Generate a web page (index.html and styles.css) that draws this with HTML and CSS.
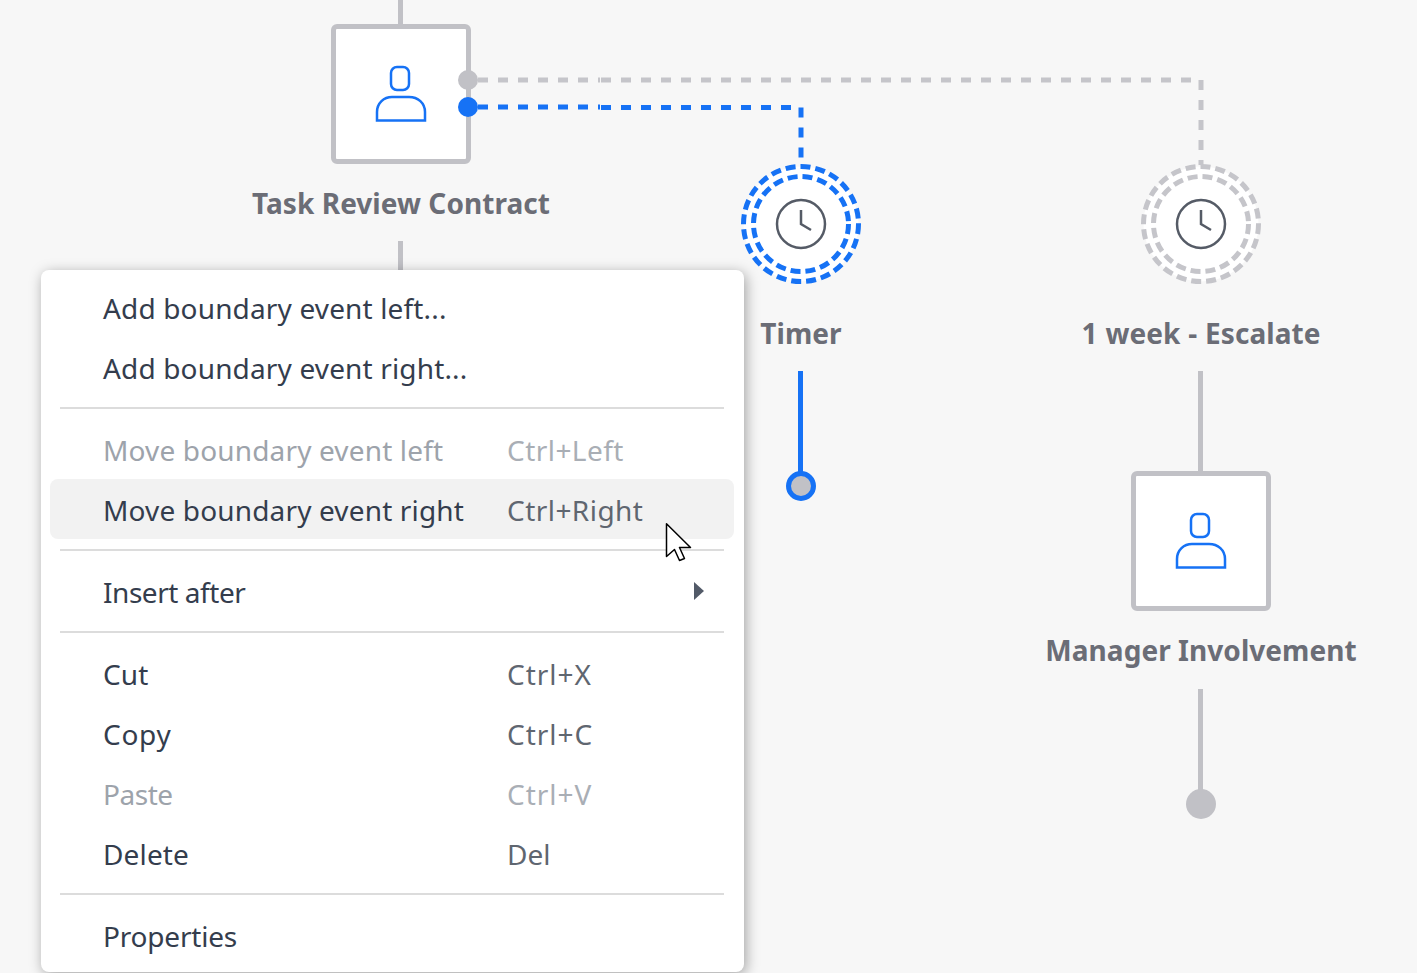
FILE: index.html
```html
<!DOCTYPE html>
<html lang="en">
<head>
<meta charset="utf-8">
<title>Process diagram</title>
<link rel="stylesheet" href="styles.css">
</head>
<body>
<main class="canvas">
  <svg class="wires" width="1417" height="973" viewBox="0 0 1417 973" fill="none">
    <g class="wire-solid">
      <path d="M400.5 0V24"/><path d="M400.5 241V280"/>
      <path d="M1200.5 371V472"/><path d="M1200.5 689V790"/>
    </g>
    <path class="wire-solid-blue" d="M800.5 371V472"/>
    <path class="wire-dash" d="M478 80H600"/>
    <path class="wire-dash" d="M601 80H1201V165"/>
    <path class="wire-dash-blue" d="M478 107H600"/>
    <path class="wire-dash-blue" d="M601 107.500H801V165"/>
  </svg>

  <div class="task task-review">
    <svg class="person" width="54" height="60" viewBox="-1 -2 54 60" fill="none"><rect x="16" y="1" width="18" height="23" rx="6"/><path d="M2 54.500V46C2 37 9 31 17 31H34C43 31 50 37 50 46V54.500Z"/></svg>
  </div>
  <div class="label label-review">Task Review Contract</div>

  <div class="timer timer-blue">
    <svg width="124" height="124" viewBox="0 0 124 124" fill="none"><circle class="ring" cx="62" cy="62" r="57.500"/><circle class="ring" cx="62" cy="62" r="47.500"/><circle class="face" cx="62" cy="62" r="24"/><path class="face" d="M62 48V62L72 68"/></svg>
  </div>
  <div class="label label-timer">Timer</div>

  <div class="timer timer-grey">
    <svg width="124" height="124" viewBox="0 0 124 124" fill="none"><circle class="ring" cx="62" cy="62" r="57.500"/><circle class="ring" cx="62" cy="62" r="47.500"/><circle class="face" cx="62" cy="62" r="24"/><path class="face" d="M62 48V62L72 68"/></svg>
  </div>
  <div class="label label-week">1 week - Escalate</div>

  <div class="task task-manager">
    <svg class="person" width="54" height="60" viewBox="-1 -2 54 60" fill="none"><rect x="16" y="1" width="18" height="23" rx="6"/><path d="M2 54.500V46C2 37 9 31 17 31H34C43 31 50 37 50 46V54.500Z"/></svg>
  </div>
  <div class="label label-manager">Manager Involvement</div>

  <svg class="wires" width="1417" height="973" viewBox="0 0 1417 973" fill="none">
    <circle class="dot" cx="468" cy="80" r="10"/>
    <circle class="dot-blue" cx="468" cy="107" r="10"/>
    <circle class="end-blue" cx="801" cy="486" r="12.500"/>
    <circle class="dot" cx="1201" cy="804" r="15"/>
  </svg>

  <nav class="menu">
    <div class="item"><span class="name">Add boundary event left...</span></div>
    <div class="item"><span class="name">Add boundary event right...</span></div>
    <hr class="sep">
    <div class="item off"><span class="name">Move boundary event left</span><span class="key">Ctrl+Left</span></div>
    <div class="item hover"><span class="name">Move boundary event right</span><span class="key">Ctrl+Right</span></div>
    <hr class="sep">
    <div class="item"><span class="name tight">Insert after</span><i class="arrow"></i></div>
    <hr class="sep">
    <div class="item"><span class="name">Cut</span><span class="key wide">Ctrl+X</span></div>
    <div class="item"><span class="name loose">Copy</span><span class="key wide">Ctrl+C</span></div>
    <div class="item off"><span class="name tight">Paste</span><span class="key wide">Ctrl+V</span></div>
    <div class="item"><span class="name">Delete</span><span class="key short">Del</span></div>
    <hr class="sep">
    <div class="item"><span class="name tight-slight">Properties</span></div>
  </nav>

  <svg class="cursor" width="28" height="40" viewBox="0 0 28 40"><path d="M1.500 0.800V33.500L9.500 26.500L14.500 37.500L19.500 35.500L14.500 24.500H25.500Z" fill="#fff" stroke="#000" stroke-width="1.500" stroke-linejoin="round"/></svg>
</main>
</body>
</html>
```
FILE: styles.css
```css
* { box-sizing: border-box; }
html, body { margin: 0; height: 100%; }
body { background: #f7f7f7; overflow: hidden; font-family: "Noto Sans", "Open Sans", sans-serif; }
.canvas { position: relative; width: 1417px; height: 973px; overflow: hidden; }

.wires { position: absolute; left: 0; top: 0; }
.wire-solid path { stroke: #c1c1c6; stroke-width: 5; }
.wire-solid-blue { stroke: #1672f5; stroke-width: 5; }
.wire-dash { stroke: #c5c5ca; stroke-width: 5; stroke-dasharray: 10 10; }
.wire-dash-blue { stroke: #1672f5; stroke-width: 5; stroke-dasharray: 10 10; }
.dot { fill: #c1c1c6; }
.dot-blue { fill: #1672f5; }
.end-blue { fill: #c1c1c6; stroke: #1672f5; stroke-width: 5; }

.task {
  position: absolute; width: 140px; height: 140px;
  display: flex; align-items: center; justify-content: center;
  background: #fff; border: 5px solid #c1c1c6; border-radius: 6px;
}
.task-review { left: 331px; top: 24px; }
.task-manager { left: 1131px; top: 471px; }
.person rect, .person path { stroke: #1672f5; stroke-width: 2.500; }

.label {
  position: absolute; width: 400px; text-align: center;
  font-size: 28px; line-height: 40px; font-weight: 700; color: #6b6d76;
  letter-spacing: 0.05px; white-space: nowrap;
}
.label-review { left: 201px; top: 183px; }
.label-timer { left: 601px; top: 313px; }
.label-week { left: 1001px; top: 313px; word-spacing: 0.5px; }
.label-manager { left: 1001px; top: 630px; }

.timer { position: absolute; width: 124px; height: 124px; }
.timer-blue { left: 739px; top: 162px; }
.timer-grey { left: 1139px; top: 162px; }
.timer svg { display: block; }
.ring { fill: #fff; stroke-width: 5; stroke-dasharray: 10 5; }
.timer-blue .ring { stroke: #1672f5; }
.timer-grey .ring { stroke: #c5c5ca; }
.face { stroke: #555b66; stroke-width: 2.500; }

.menu {
  position: absolute; left: 41px; top: 270px; width: 703px; height: 702px;
  padding: 7px 10px 7px 9px; background: #fff; border-radius: 8px;
  box-shadow: 2px 3px 14px rgba(0, 0, 0, 0.35);
}
.item {
  display: flex; align-items: center; height: 60px; padding: 2px 0 0 53px;
  position: relative; border-radius: 8px;
  font-size: 28px; color: #343d4d; white-space: nowrap;
}
.item.off { color: #9da3ab; }
.item.hover { background: #f2f2f2; }
.name { width: 404px; flex: none; letter-spacing: 0.15px; }
.name.tight { letter-spacing: -0.45px; }
.name.tight-slight { letter-spacing: -0.2px; }
.name.loose { letter-spacing: 0.7px; }
.key { color: #5f6670; letter-spacing: 0.45px; }
.key.wide { letter-spacing: 1px; }
.key.short { letter-spacing: 0; }
.off .key { color: #a9aeb5; }
.sep { height: 2px; margin: 10px; border: 0; background: #dcdcdc; }
.arrow {
  position: absolute; right: 30px; top: 21px; width: 0; height: 0;
  border-style: solid; border-width: 9px 0 9px 10px; border-color: transparent transparent transparent #525a68;
}
.cursor { position: absolute; left: 665px; top: 523px; }
```
